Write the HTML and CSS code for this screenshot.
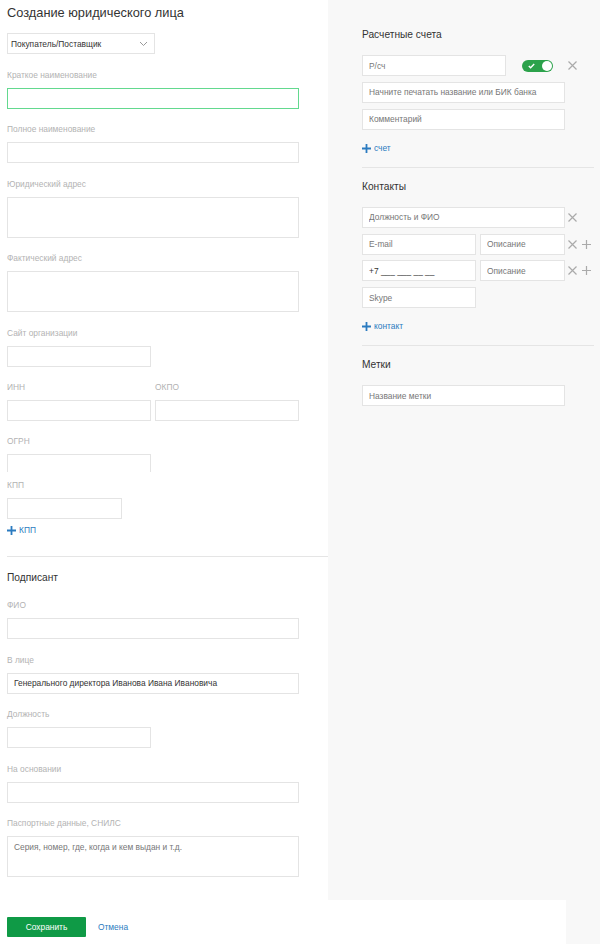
FILE: index.html
```html
<!DOCTYPE html>
<html lang="ru">
<head>
    <meta charset="UTF-8">
    <title>Создание юридического лица</title>
    <link rel="stylesheet" href="styles.css">
</head>
<body>
<div class="layout">
    <!-- Main form -->
    <div class="form-main">
        <h1 class="page-title">Создание юридического лица</h1>

        <div class="select">
            <span>Покупатель/Поставщик</span>
            <svg width="9" height="6" viewBox="0 0 9 6"><path d="M1 1l3.5 3.5L8 1" fill="none" stroke="#999" stroke-width="1"/></svg>
        </div>

        <div class="field">
            <label>Краткое наименование</label>
            <input type="text" class="input focused">
        </div>
        <div class="field">
            <label>Полное наименование</label>
            <input type="text" class="input">
        </div>
        <div class="field">
            <label>Юридический адрес</label>
            <textarea class="textarea"></textarea>
        </div>
        <div class="field">
            <label>Фактический адрес</label>
            <textarea class="textarea"></textarea>
        </div>
        <div class="field">
            <label>Сайт организации</label>
            <input type="text" class="input half">
        </div>
        <div class="field-row">
            <div class="field">
                <label>ИНН</label>
                <input type="text" class="input">
            </div>
            <div class="field">
                <label>ОКПО</label>
                <input type="text" class="input">
            </div>
        </div>
        <div class="field cut">
            <label>ОГРН</label>
            <div class="clip"><input type="text" class="input half"></div>
        </div>
        <div class="field kpp">
            <label>КПП</label>
            <input type="text" class="input small">
        </div>
        <a class="add-link" href="#">
            <svg width="9" height="9" viewBox="0 0 9 9"><path d="M4.5 0v9M0 4.5h9" stroke="#2b7bc0" stroke-width="1.8"/></svg>
            КПП
        </a>

        <hr class="divider">

        <h2 class="section-title">Подписант</h2>
        <div class="field">
            <label>ФИО</label>
            <input type="text" class="input">
        </div>
        <div class="field">
            <label>В лице</label>
            <input type="text" class="input" value="Генерального директора Иванова Ивана Ивановича">
        </div>
        <div class="field">
            <label>Должность</label>
            <input type="text" class="input half">
        </div>
        <div class="field">
            <label>На основании</label>
            <input type="text" class="input">
        </div>
        <div class="field">
            <label>Паспортные данные, СНИЛС</label>
            <textarea class="textarea" placeholder="Серия, номер, где, когда и кем выдан и т.д."></textarea>
        </div>
    </div>

    <!-- Side panel -->
    <div class="side">
        <h2 class="section-title">Расчетные счета</h2>
        <div class="row">
            <input type="text" class="input acc" placeholder="Р/сч">
            <span class="toggle">
                <svg width="7" height="6" viewBox="0 0 7 6"><path d="M0.8 3l1.8 1.8L6.2 1" fill="none" stroke="#fff" stroke-width="1.4"/></svg>
                <span class="knob"></span>
            </span>
            <svg class="icon-x gap-x" width="9" height="9" viewBox="0 0 9 9"><path d="M0.5 0.5l8 8M8.5 0.5l-8 8" stroke="#aaa" stroke-width="1.2"/></svg>
        </div>
        <div class="row">
            <input type="text" class="input wide" placeholder="Начните печатать название или БИК банка">
        </div>
        <div class="row">
            <input type="text" class="input wide" placeholder="Комментарий">
        </div>
        <a class="add-link side-link" href="#">
            <svg width="9" height="9" viewBox="0 0 9 9"><path d="M4.5 0v9M0 4.5h9" stroke="#2b7bc0" stroke-width="1.8"/></svg>
            счет
        </a>

        <hr class="divider">

        <h2 class="section-title">Контакты</h2>
        <div class="row">
            <input type="text" class="input wide" placeholder="Должность и ФИО">
            <svg class="icon-x" width="9" height="9" viewBox="0 0 9 9"><path d="M0.5 0.5l8 8M8.5 0.5l-8 8" stroke="#aaa" stroke-width="1.2"/></svg>
        </div>
        <div class="row">
            <input type="text" class="input contact" placeholder="E-mail">
            <input type="text" class="input desc" placeholder="Описание">
            <svg class="icon-x" width="9" height="9" viewBox="0 0 9 9"><path d="M0.5 0.5l8 8M8.5 0.5l-8 8" stroke="#aaa" stroke-width="1.2"/></svg>
            <svg class="icon-plus" width="9" height="9" viewBox="0 0 9 9"><path d="M4.5 0v9M0 4.5h9" stroke="#aaa" stroke-width="1.2"/></svg>
        </div>
        <div class="row">
            <input type="text" class="input contact dark" placeholder="+7 ___ ___ __ __">
            <input type="text" class="input desc" placeholder="Описание">
            <svg class="icon-x" width="9" height="9" viewBox="0 0 9 9"><path d="M0.5 0.5l8 8M8.5 0.5l-8 8" stroke="#aaa" stroke-width="1.2"/></svg>
            <svg class="icon-plus" width="9" height="9" viewBox="0 0 9 9"><path d="M4.5 0v9M0 4.5h9" stroke="#aaa" stroke-width="1.2"/></svg>
        </div>
        <div class="row">
            <input type="text" class="input contact" placeholder="Skype">
        </div>
        <a class="add-link side-link" href="#">
            <svg width="9" height="9" viewBox="0 0 9 9"><path d="M4.5 0v9M0 4.5h9" stroke="#2b7bc0" stroke-width="1.8"/></svg>
            контакт
        </a>

        <hr class="divider">

        <h2 class="section-title">Метки</h2>
        <div class="row">
            <input type="text" class="input wide" placeholder="Название метки">
        </div>
    </div>
</div>

<!-- Footer buttons -->
<div class="footer">
    <button class="btn-save">Сохранить</button>
    <a class="cancel" href="#">Отмена</a>
</div>
</body>
</html>
```

FILE: styles.css
```css
html, body {
    margin: 0;
    padding: 0;
    background: #f8f8f8;
    font-family: "Liberation Sans", Arial, sans-serif;
    font-size: 8.4px;
    color: #333;
}

.layout {
    display: flex;
    min-height: 900px;
}

/* Left column */
.form-main {
    width: 328px;
    background: #fff;
    padding: 3px 0 0 7px;
    box-sizing: border-box;
}

.page-title {
    margin: 0;
    font-size: 12.8px;
    line-height: 19px;
    font-weight: normal;
    color: #333;
}

.select {
    width: 148px;
    height: 21px;
    margin: 11px 0 15px;
    border: 1px solid #e4e4e4;
    box-sizing: border-box;
    display: flex;
    align-items: center;
    justify-content: space-between;
    padding: 0 6px 0 3px;
    font-size: 8.4px;
    color: #333;
}

.field {
    margin-bottom: 14.4px;
}

.field label {
    display: block;
    line-height: 13px;
    margin-bottom: 6px;
    color: #b3b3b3;
    font-size: 8.4px;
}

.input, .textarea {
    display: block;
    width: 292px;
    height: 21px;
    margin: 0;
    border: 1px solid #e4e4e4;
    box-sizing: border-box;
    padding: 0 6px;
    font-family: "Liberation Sans", Arial, sans-serif;
    font-size: 8.4px;
    color: #333;
    background: #fff;
    outline: none;
}

.input::placeholder, .textarea::placeholder {
    color: #777;
}

.input.focused {
    border-color: #63d98f;
}

.textarea {
    height: 41px;
    padding: 5px 6px;
    resize: none;
}

.input.half { width: 144px; }
.input.small { width: 115px; }

.field-row {
    display: grid;
    grid-template-columns: 144px 144px;
    gap: 4px;
}
.field-row .input { width: 144px; }

.field.cut { margin-bottom: 7px; }
.field.cut .clip {
    height: 18px;
    overflow: hidden;
}

.field.kpp { margin-bottom: 5px; }

.add-link {
    display: flex;
    align-items: center;
    gap: 3px;
    line-height: 13px;
    color: #2b7bc0;
    text-decoration: none;
    font-size: 8.4px;
}

.divider {
    border: none;
    border-top: 1px solid #e5e5e5;
    margin: 19px 0 13px;
}

.section-title {
    margin: 0 0 13px;
    font-size: 10.2px;
    line-height: 16px;
    font-weight: normal;
    color: #333;
}

/* Right panel */
.side {
    flex: 1;
    padding: 27px 6px 0 34px;
}

.side .section-title { margin-bottom: 12px; }

.row {
    display: flex;
    align-items: center;
    margin-bottom: 5.85px;
}

.input.acc { width: 144px; }
.input.wide { width: 203px; }
.input.contact { width: 114px; }
.input.desc { width: 85px; margin-left: 4px; }
.input.dark::placeholder { color: #333; }

.toggle {
    width: 31px;
    height: 12px;
    margin-left: 16px;
    border-radius: 6px;
    background: #2ca24b;
    display: flex;
    align-items: center;
    justify-content: space-between;
    padding: 0 1px 0 6px;
    box-sizing: border-box;
}

.knob {
    width: 10px;
    height: 10px;
    border-radius: 50%;
    background: #fff;
}

.icon-x { margin-left: 3px; }
.icon-x.gap-x { margin-left: 15px; }
.icon-plus { margin-left: 5px; }

.side-link {
    margin-top: 12px;
}

.side .divider {
    margin: 12px 0 11px;
}

/* Footer */
.footer {
    width: 566px;
    height: 44px;
    background: #fff;
    box-sizing: border-box;
    padding: 17px 0 0 7px;
    display: flex;
    align-items: flex-start;
    gap: 12px;
}

.btn-save {
    width: 79px;
    height: 20px;
    border: none;
    border-radius: 1px;
    background: #0f9a46;
    color: #fff;
    font-family: "Liberation Sans", Arial, sans-serif;
    font-size: 8.4px;
    cursor: pointer;
}

.cancel {
    line-height: 20px;
    color: #2b7bc0;
    text-decoration: none;
    font-size: 8.4px;
}
```
